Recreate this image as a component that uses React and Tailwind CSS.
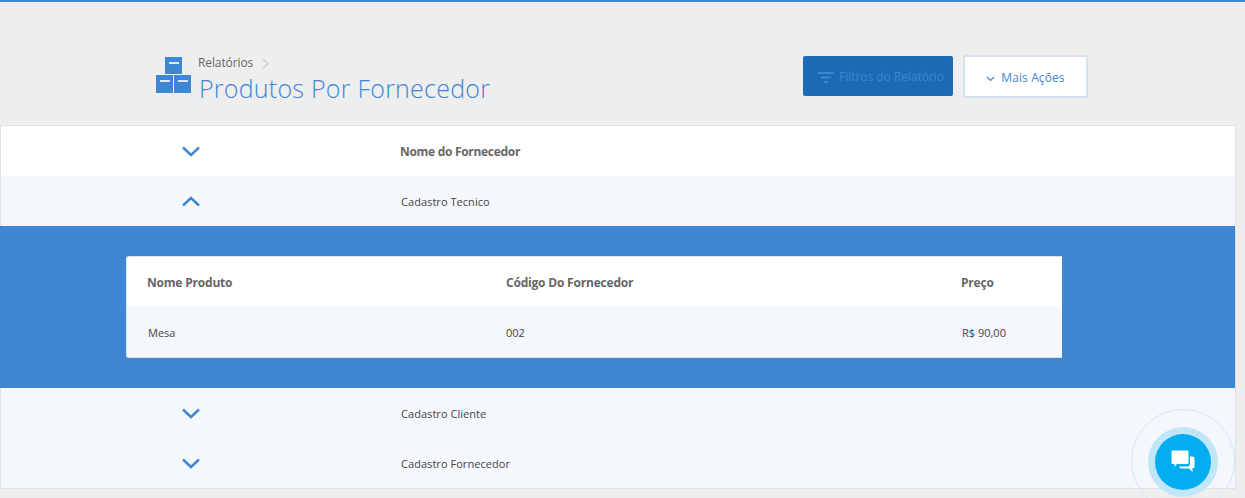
const font = { fontFamily: '"Open Sans", "Noto Sans", sans-serif' };

function Chevron({ up }) {
  return (
    <svg width="18" height="11" viewBox="0 0 18 11" fill="none" stroke="#3f86d4" strokeWidth="2.4" className="block">
      <path d={up ? "M1 9.5 L9 2 L17 9.5" : "M1 1.5 L9 9 L17 1.5"} />
    </svg>
  );
}

function Box({ tall }) {
  return (
    <div className={`w-[17px] ${tall ? "h-[18px]" : "h-[17px]"} bg-[#3f86d4] flex justify-center pt-[5px]`}>
      <div className="w-[10px] h-[2px] bg-[#dfe9f5]" />
    </div>
  );
}

function BoxesIcon() {
  return (
    <div className="w-[35px] flex flex-col items-center gap-[1px] mt-[2px]">
      <Box />
      <div className="flex gap-[1px]">
        <Box tall />
        <Box tall />
      </div>
    </div>
  );
}

function Row({ up, bold, bg, label }) {
  return (
    <div className={`h-[50px] flex items-center ${bg}`}>
      <div className="w-[399px] pl-[181px] shrink-0">
        <Chevron up={up} />
      </div>
      <div className={bold ? "pt-[2px] text-[12px] font-bold text-[#666666] tracking-[-0.3px]" : "pt-[2px] pl-[1px] text-[11px] text-[#444444] tracking-[0.05px]"}>{label}</div>
    </div>
  );
}

export default function App() {
  return (
    <div style={font} className="relative w-[1245px] h-[498px] overflow-hidden bg-[#eeeeee] border-t-2 border-[#3f86d4]">
      <header className="h-[123px] flex items-start pl-[156px] pr-[157px] pt-[53px]">
        <div className="flex gap-[7px] flex-1">
          <BoxesIcon />
          <div>
            <div className="flex items-center gap-[9px] h-[16px]">
              <span className="text-[12px] text-[#666666] tracking-[-0.1px]">Relatórios</span>
              <svg width="7" height="11" viewBox="0 0 7 11" fill="none" stroke="#cccccc" strokeWidth="1.2"><path d="M1 1 L6 5.5 L1 10" /></svg>
            </div>
            <div className="pl-[1px] text-[25px] leading-[34px] font-light text-[#3f86d4] tracking-[0.24px]">Produtos Por Fornecedor</div>
          </div>
        </div>
        <div className="flex gap-[10px] items-start">
          <button className="w-[150px] h-[40px] mt-[1px] pt-[2px] pl-[6px] rounded-[2px] bg-[#1b6ab5] text-[#3f86d4] text-[12px] tracking-[-0.03px] flex items-center justify-center gap-[5px]">
            <svg width="16" height="11" viewBox="0 0 16 11" fill="none" stroke="#3f86d4" strokeWidth="2" className="block"><path d="M0 1 H16 M3 5.5 H13 M6 10 H10" /></svg>
            Filtros do Relatório
          </button>
          <button className="w-[125px] h-[43px] pt-[2px] rounded-[2px] bg-white border-2 border-[#d5e1ee] text-[#3f86d4] text-[12px] flex items-center justify-center gap-[6px] tracking-[0.1px]">
            <svg width="9" height="6" viewBox="0 0 9 6" fill="none" stroke="#3f86d4" strokeWidth="1.2" className="block mt-[2px]"><path d="M1 1 L4.5 4.5 L8 1" /></svg>
            Mais Ações
          </button>
        </div>
      </header>

      <main className="w-[1236px] border border-[#dde2ea]">
        <Row bold bg="bg-white" label="Nome do Fornecedor" />
        <Row up bg="bg-[#f4f7fc]" label="Cadastro Tecnico" />
        <div className="h-[162px] -ml-[1px] bg-[#3f86d4] pt-[30px] pl-[126px]">
          <div className="w-[936px] h-[102px] rounded-l-[3px] overflow-hidden border-t border-b border-l border-[#dde2ea] bg-white">
            <div className="h-[50px] pt-[2px] flex items-center text-[12px] font-bold text-[#666666] tracking-[-0.2px]">
              <div className="w-[379px] pl-[20px]">Nome Produto</div>
              <div className="w-[455px]">Código Do Fornecedor</div>
              <div>Preço</div>
            </div>
            <div className="h-[50px] pt-[2px] flex items-center text-[11px] text-[#444444] bg-[#f4f7fc]">
              <div className="w-[379px] pl-[21px]">Mesa</div>
              <div className="w-[456px]">002</div>
              <div>R$ 90,00</div>
            </div>
          </div>
        </div>
        <Row bg="bg-[#f4f7fc]" label="Cadastro Cliente" />
        <Row bg="bg-[#f4f7fc]" label="Cadastro Fornecedor" />
      </main>

      <div className="absolute left-[1131px] top-[407px] w-[104px] h-[104px] rounded-full border border-[#cfe9f7]" />
      <div className="absolute left-[1148px] top-[425px] w-[70px] h-[70px] rounded-full bg-[#c0e6f8] flex items-center justify-center">
        <div className="w-[56px] h-[56px] rounded-full bg-[#03aef0] flex items-center justify-center">
          <svg width="26" height="24" viewBox="0 0 26 24" fill="white">
            <path d="M1.5 1.5 Q1.5 0.5 2.5 0.5 H17.5 Q18.5 0.5 18.5 1.5 V13 Q18.5 14 17.5 14 H7 L4.5 17 V14 H2.5 Q1.5 14 1.5 13 Z" />
            <path d="M20 6.5 H22 Q24.5 6.5 24.5 8 V17 Q24.5 18 23.5 18 H22.5 V22 L19 18.5 H10.5 L9 16.5 H17.5 Q20 16.5 20 14 Z" />
          </svg>
        </div>
      </div>
    </div>
  );
}
